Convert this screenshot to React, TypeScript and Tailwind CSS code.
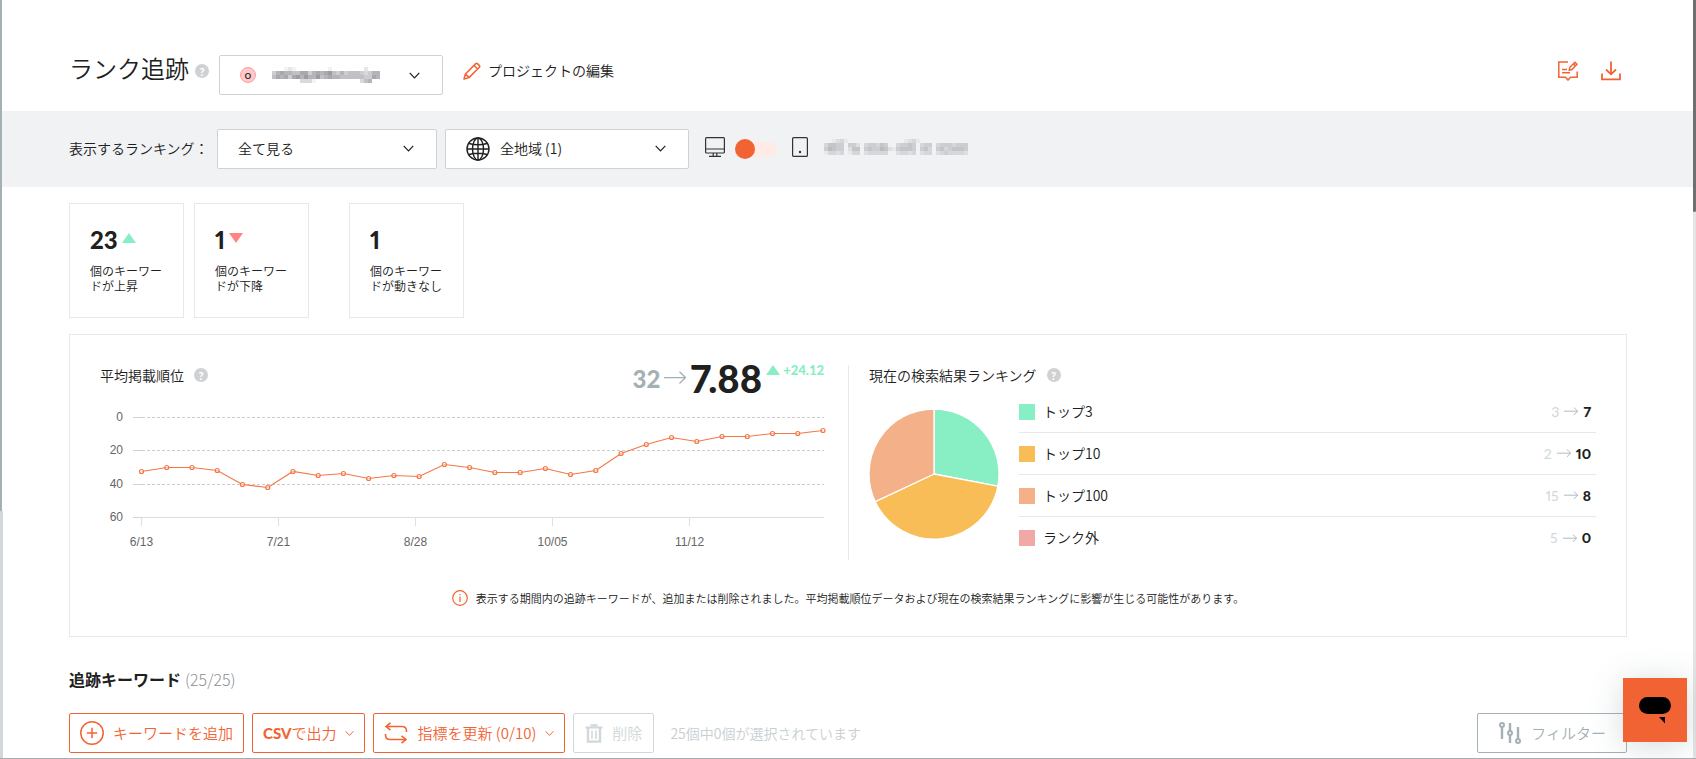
import React from "react";

const points = [
  92, 88, 88, 91, 105, 108, 92, 96, 94, 99, 96, 97, 85, 88, 93, 93, 89, 95, 91, 74, 65, 58, 62, 57, 57, 54, 54, 51,
];

const yTicks = [
  { label: "0", y: 38 },
  { label: "20", y: 71 },
  { label: "40", y: 105 },
  { label: "60", y: 138 },
];

const xTicks = ["6/13", "7/21", "8/28", "10/05", "11/12"];

const rankings = [
  { label: "トップ3", color: "bg-[#88eec3]", before: 3, after: 7 },
  { label: "トップ10", color: "bg-[#f9bd58]", before: 2, after: 10 },
  { label: "トップ100", color: "bg-[#f4b088]", before: 15, after: 8 },
  { label: "ランク外", color: "bg-[#f3a8a8]", before: 5, after: 0 },
];

// one digit per cell, 0 is empty and 9 is the darkest
const domainMosaic = [
  "000121000000001000000002000",
  "467665577467678546455543466",
  "576747868668567665555554476",
  "000000033310000000000035600",
];

const dateMosaic = [
  "001231000000000000001231000000000000",
  "355440442034435400344540344034443444",
  "465440255045446521455540453045345554",
  "133230133023333300233230233023433332",
];

const Mosaic = ({ rows, color, className }: { rows: string[]; color: string; className: string }) => (
  <svg className={className} viewBox={`0 0 ${rows[0].length * 4} ${rows.length * 4}`} shapeRendering="crispEdges" aria-hidden="true">
    {rows.map((row, y) =>
      row.split("").map((v, x) => (
        <rect key={`${x}-${y}`} x={x * 4} y={y * 4} width="4" height="4" fill={color} opacity={Number(v) / 12} />
      ))
    )}
  </svg>
);

const Chevron = ({ className = "" }: { className?: string }) => (
  <svg className={className} width="11" height="7" viewBox="0 0 11 7" fill="none" stroke="currentColor" strokeWidth="1.2" aria-hidden="true">
    <path d="M0.7 0.8L5.5 5.8L10.3 0.8" />
  </svg>
);

const Help = () => (
  <button type="button" aria-label="ヘルプ" className="flex h-[14px] w-[14px] items-center justify-center rounded-full bg-[#cfd1d3] font-['Lato',sans-serif] text-[11px] leading-none font-black text-white">
    ?
  </button>
);

const Arrow = ({ width }: { width: number }) => (
  <svg width={width} height={width * 0.6} viewBox="0 0 22 13" fill="none" stroke="#a3b1b5" strokeWidth="1.4" aria-hidden="true">
    <path d="M0 6.5H21.5M15.5 0.7L21.5 6.5L15.5 12.3" />
  </svg>
);

const Up = () => (
  <svg width="14" height="10" viewBox="0 0 14 10" aria-hidden="true">
    <path d="M7 0L14 10H0Z" fill="#88eec3" />
  </svg>
);

const Down = () => (
  <svg width="14" height="10" viewBox="0 0 14 10" aria-hidden="true">
    <path d="M0 0H14L7 10Z" fill="#ff8585" />
  </svg>
);

const StatCard = ({ value, trend, text, className = "" }: { value: number; trend?: React.ReactNode; text: string; className?: string }) => (
  <div className={`h-[115px] w-[115px] border border-[#e6e9ea] px-5 pt-5 ${className}`}>
    <div className="flex h-8 items-center gap-1 font-['Lato',sans-serif] text-2xl font-black proportional-nums">
      {value}
      <span className="pb-1">{trend}</span>
    </div>
    <p className="mt-[7px] w-[73px] text-xs leading-[15px] break-all">{text}</p>
  </div>
);

const LineChart = () => {
  const coords = points.map((y, i) => ({ x: 41.5 + i * 25.24, y: y + 0.5 }));
  return (
    <svg className="w-full overflow-visible" viewBox="0 0 724 176" role="img" aria-label="平均掲載順位">
      {yTicks.map((t) => (
        <g key={t.label}>
          <text x="23" y={t.y + 4} textAnchor="end" fontSize="12" fill="#666" fontFamily="Liberation Sans, sans-serif">
            {t.label}
          </text>
          <path d={`M33 ${t.y + 0.5}H42`} stroke="#cfd4d6" />
          <path d={`M42 ${t.y + 0.5}H724`} stroke={t.label === "60" ? "#dcdedf" : "#cbcbcb"} strokeDasharray={t.label === "60" ? undefined : "3 2"} />
        </g>
      ))}
      {xTicks.map((label, i) => (
        <g key={label}>
          <path d={`M${41.5 + i * 137} 138V147`} stroke="#dcdedf" />
          <text x={41.5 + i * 137} y="167" textAnchor="middle" fontSize="12" fill="#666" fontFamily="Liberation Sans, sans-serif">
            {label}
          </text>
        </g>
      ))}
      <polyline points={coords.map((c) => `${c.x},${c.y}`).join(" ")} fill="none" stroke="#f57745" strokeWidth="1.2" />
      {coords.map((c) => (
        <circle key={c.x} cx={c.x} cy={c.y} r="2" fill="#fff" fillOpacity="0.5" stroke="#f57745" strokeWidth="1.2" />
      ))}
    </svg>
  );
};

const PieChart = () => (
  <svg className="shrink-0" width="130" height="130" viewBox="-65 -65 130 130" stroke="#fff" strokeWidth="1.3" role="img" aria-label="現在の検索結果ランキング">
    <path d="M0 0V-65A65 65 0 0 1 63.9 12.2Z" fill="#88eec3" />
    <path d="M0 0L63.9 12.2A65 65 0 0 1 -58.8 27.7Z" fill="#f9bd58" />
    <path d="M0 0L-58.8 27.7A65 65 0 0 1 0 -65Z" fill="#f4b088" />
  </svg>
);

export default function App() {
  return (
    <div className="relative min-h-screen overflow-hidden border-b border-[#a9abac] bg-white font-['Noto_Sans_CJK_JP',sans-serif] text-sm font-[350] text-[#202020]">
      <div className="absolute top-0 left-0 h-[511px] w-[2px] bg-[#a3b1b5]" />
      <div className="absolute top-[511px] bottom-0 left-0 w-[3px] bg-[#d1d7da]" />
      <div className="absolute top-0 right-0 bottom-0 w-[3px] bg-[#e4e4e4]" />
      <div className="absolute top-0 right-0 h-[212px] w-[3px] rounded-b bg-[#6f7070]" />

      <header className="flex h-[111px] items-center pt-[31px] pr-[75px] pl-[69px]">
        <h1 className="pb-[6px] text-2xl leading-8 font-[350]">ランク追跡</h1>
        <div className="ml-[6px]">
          <Help />
        </div>
        <div className="relative mt-2 ml-[10px]">
          <select aria-label="プロジェクト" className="block h-10 w-56 appearance-none rounded-[2px] border border-[#cdd3d5] bg-white">
            <option value="0"></option>
          </select>
          <div className="pointer-events-none absolute inset-0 flex items-center pr-[23px] pl-[21px]">
            <span className="flex h-4 w-4 items-center justify-center rounded-full border border-[#ff9c9c] bg-[#ffc9c9] font-['Lato',sans-serif] text-xs leading-none font-normal">o</span>
            <Mosaic rows={domainMosaic} color="#6a6a74" className="ml-4 h-4 w-[108px]" />
            <Chevron className="ml-auto" />
          </div>
        </div>
        <a href="#edit" className="ml-5 flex items-center gap-[7px]">
          <svg width="18" height="18" viewBox="0 0 18 18" fill="none" stroke="#f26334" strokeWidth="1.5" strokeLinejoin="round" aria-hidden="true">
            <path d="M1 17L2.4 12L12.8 1.6Q13.6 0.8 14.4 1.6L16.4 3.6Q17.2 4.4 16.4 5.2L6 15.6ZM11 3.5L14.6 7M2.4 12L6 15.6" />
          </svg>
          <span className="pb-[2px]">プロジェクトの編集</span>
        </a>
        <div className="ml-auto flex gap-[23px] text-[#f26334]">
          <button type="button" aria-label="メモ">
            <svg width="20" height="20" viewBox="0 0 20 20" fill="none" stroke="currentColor" strokeWidth="1.5">
              <path d="M10 0.9H0.8V16.2H7.5L10 19L12.5 16.2H19.2V10.5M4 8.6H9M4 11.8H12" />
              <path d="M11.3 9.2L11.8 6.3L16.9 1.2L19 3.3L13.9 8.5ZM15.3 2.8L17.4 4.9" />
            </svg>
          </button>
          <button type="button" aria-label="ダウンロード">
            <svg width="20" height="20" viewBox="0 0 20 20" fill="none" stroke="currentColor" strokeWidth="1.8">
              <path d="M1 12.5V18.3H19V12.5M10 0.5V13M5 8.5L10 13.3L15 8.5" />
            </svg>
          </button>
        </div>
      </header>

      <div className="mr-[3px] ml-[2px] flex h-[76px] items-center bg-[#f0f2f4] pl-[67px]">
        <label htmlFor="ranking" className="w-[148px] pb-[2px]">
          表示するランキング：
        </label>
        <div className="relative">
          <select id="ranking" className="block h-10 w-[220px] appearance-none rounded-[2px] border border-[#cdd3d5] bg-white pb-[2px] pl-5">
            <option>全て見る</option>
          </select>
          <Chevron className="pointer-events-none absolute top-4 right-[23px]" />
        </div>
        <div className="relative ml-2">
          <select aria-label="地域" className="block h-10 w-[244px] appearance-none rounded-[2px] border border-[#cdd3d5] bg-white pb-[2px] pl-[54px]">
            <option>全地域 (1)</option>
          </select>
          <svg className="pointer-events-none absolute top-2 left-[21px]" width="24" height="24" viewBox="0 0 24 24" fill="none" stroke="#202020" strokeWidth="1.4" aria-hidden="true">
            <circle cx="12" cy="12" r="11" />
            <ellipse cx="12" cy="12" rx="5.5" ry="11" />
            <path d="M12 1V23M1 12H23M3 6.5Q12 9 21 6.5M3 17.5Q12 15 21 17.5" />
          </svg>
          <Chevron className="pointer-events-none absolute top-4 right-[23px]" />
        </div>
        <div className="ml-4 flex items-center pb-1">
          <svg width="20" height="20" viewBox="0 0 20 20" fill="none" stroke="#333" strokeWidth="1.2" aria-hidden="true">
            <rect x="0.6" y="0.6" width="18.8" height="15.4" rx="1" />
            <path d="M0.6 12H19.4M8.2 16V19M11.8 16V19M4 19.4H16" />
          </svg>
          <input
            type="checkbox"
            aria-label="デバイス"
            className="relative mt-1 ml-[10px] h-[15px] w-[42px] appearance-none rounded-full bg-[#ffebe5] before:absolute before:-top-[3px] before:left-0 before:h-5 before:w-5 before:rounded-full before:bg-[#f26334]"
          />
          <svg className="ml-[15px]" width="16" height="20" viewBox="0 0 16 20" fill="none" stroke="#333" strokeWidth="1.2" aria-hidden="true">
            <rect x="0.6" y="0.6" width="14.8" height="18.8" rx="1" />
            <circle cx="8" cy="15" r="1.2" fill="#333" stroke="none" />
          </svg>
          <Mosaic rows={dateMosaic} color="#85868c" className="ml-4 h-4 w-36" />
        </div>
      </div>

      <main className="px-[69px] pt-4">
        <section className="flex">
          <StatCard value={23} trend={<Up />} text="個のキーワードが上昇" />
          <StatCard value={1} trend={<Down />} text="個のキーワードが下降" className="ml-[10px]" />
          <StatCard value={1} text="個のキーワードが動きなし" className="ml-10" />
        </section>

        <section className="mt-4 border border-[#e6e9ea] p-[30px]">
          <div className="grid grid-cols-[749fr_747fr]">
            <div className="h-[195px] border-r border-[#e6e9ea] pr-6">
              <div className="flex h-[14px] items-start justify-between">
                <h2 className="flex items-center gap-[10px] leading-5 font-[350]">
                  平均掲載順位 <Help />
                </h2>
                <div className="flex items-start font-['Lato',sans-serif]">
                  <span className="pt-1 text-2xl leading-5 font-black text-[#a3b1b5]">32</span>
                  <span className="px-1 pt-[6px]">
                    <Arrow width={22} />
                  </span>
                  <span className="text-[38px] leading-[26px] font-black proportional-nums">7.88</span>
                  <span className="ml-1 flex items-center gap-[3px] text-[13px] leading-[10px] font-black text-[#88eec3]">
                    <Up />
                    +24.12
                  </span>
                </div>
              </div>
              <LineChart />
            </div>
            <div className="pl-5">
              <h2 className="flex items-center gap-[10px] leading-5 font-[350]">
                現在の検索結果ランキング <Help />
              </h2>
              <div className="mt-[6px] flex">
                <div className="pt-[18px]">
                  <PieChart />
                </div>
                <ul className="ml-5 flex-1">
                  {rankings.map((r) => (
                    <li key={r.label} className="flex h-[42px] items-center border-b border-[#e6e9ea] pr-[5px] last:border-0">
                      <span className={`h-4 w-4 ${r.color}`} />
                      <span className="ml-2 pb-[2px]">{r.label}</span>
                      <span className="ml-auto flex items-center gap-[5px] font-['Lato',sans-serif] proportional-nums">
                        <span className="font-normal text-[#d1d7da]">{r.before}</span>
                        <Arrow width={14} />
                        <span className="font-black">{r.after}</span>
                      </span>
                    </li>
                  ))}
                </ul>
              </div>
            </div>
          </div>
          <p className="mt-[30px] flex items-center justify-center gap-2 text-[11px] leading-4">
            <svg width="16" height="16" viewBox="0 0 16 16" fill="none" stroke="#f26334" aria-hidden="true">
              <circle cx="8" cy="8" r="7.3" strokeWidth="1.2" />
              <path d="M8 6.5V12M8 4V5.3" strokeWidth="1.2" />
            </svg>
            表示する期間内の追跡キーワードが、追加または削除されました。平均掲載順位データおよび現在の検索結果ランキングに影響が生じる可能性があります。
          </p>
        </section>

        <h2 className="mt-[30px] flex items-center gap-1 text-base leading-6 font-bold">
          追跡キーワード <span className="font-light text-[#8f8f8f]">(25/25)</span>
        </h2>

        <div className="mt-[22px] flex items-center gap-2 pb-[5px] text-[15px]">
          <button type="button" className="flex h-10 items-center gap-[9px] rounded-[2px] border border-[#f26334] px-[10px] text-[#f26334]">
            <svg width="24" height="24" viewBox="0 0 24 24" fill="none" stroke="currentColor" strokeWidth="1.5" aria-hidden="true">
              <circle cx="12" cy="12" r="11.2" />
              <path d="M12 6.8V17.2M6.8 12H17.2" />
            </svg>
            キーワードを追加
          </button>
          <button type="button" className="flex h-10 items-center gap-[9px] rounded-[2px] border border-[#f26334] px-[10px] text-[#f26334]">
            <span>
              <span className="font-['Lato',sans-serif] font-black">CSV</span>で出力
            </span>
            <Chevron className="w-[9px]" />
          </button>
          <button type="button" className="flex h-10 items-center gap-[9px] rounded-[2px] border border-[#f26334] px-[10px] text-[#f26334]">
            <svg width="24" height="22" viewBox="0 0 24 22" fill="none" stroke="currentColor" strokeWidth="1.6" aria-hidden="true">
              <path d="M22.5 10V9Q22.5 4.5 18 4.5H2M6.5 0.8L2 4.5L6.5 8.2M1.5 12V13Q1.5 17.5 6 17.5H22M17.5 13.8L22 17.5L17.5 21.2" />
            </svg>
            指標を更新 (0/10)
            <Chevron className="w-[9px]" />
          </button>
          <button type="button" disabled className="flex h-10 items-center gap-[9px] rounded-[2px] border border-[#d1d7da] px-[11px] text-[#d1d7da]">
            <svg width="18" height="19" viewBox="0 0 18 19" fill="none" stroke="currentColor" aria-hidden="true">
              <path d="M0.5 3.5H17.5M5.5 1.3H12.5" strokeWidth="2" />
              <path d="M3 4V17.6H15V4" strokeWidth="2.4" />
              <path d="M7 6.5V15M11 6.5V15" strokeWidth="1.5" />
            </svg>
            削除
          </button>
          <span className="ml-2 text-sm text-[#c8cfd2]">25個中0個が選択されています</span>
          <button type="button" className="ml-auto flex h-10 items-center gap-[9px] rounded-[2px] border border-[#a3b1b5] px-5 text-[#a3b1b5]">
            <svg width="24" height="22" viewBox="0 0 24 22" fill="none" stroke="currentColor" strokeWidth="2.4" aria-hidden="true">
              <circle cx="4" cy="3" r="2" strokeWidth="2" />
              <circle cx="12" cy="11" r="2" strokeWidth="2" />
              <circle cx="20" cy="19" r="2" strokeWidth="2" />
              <path d="M4 5V17M12 1V9M12 13V21M20 5V17" />
            </svg>
            フィルター
          </button>
        </div>
      </main>

      <button type="button" aria-label="チャット" className="absolute right-[9px] bottom-4 flex h-16 w-16 items-center justify-center bg-[#f26334] shadow-[0_4px_32px_rgba(90,110,120,0.25)]">
        <svg width="32" height="28" viewBox="0 0 32 28" aria-hidden="true">
          <rect x="0" y="1" width="32" height="17" rx="8.5" />
          <path d="M20 21H26V27.5Z" />
        </svg>
      </button>
    </div>
  );
}
